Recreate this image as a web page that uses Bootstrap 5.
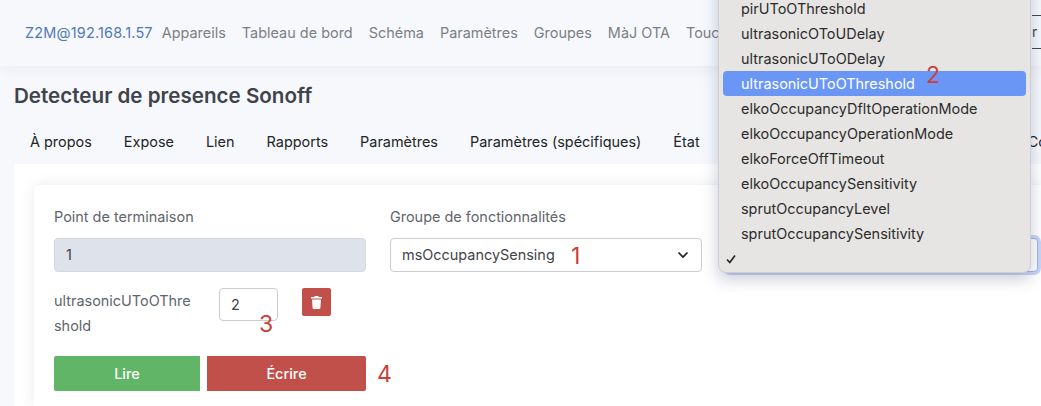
<!doctype html>
<html lang="fr">
<head>
<meta charset="utf-8">
<link href="https://cdn.jsdelivr.net/npm/bootstrap@5.3.0/dist/css/bootstrap.min.css" rel="stylesheet">
<style>
html,body{height:406px;overflow:hidden}
body{background:#f6f8fc;font-family:Inter,"Liberation Sans",sans-serif;font-size:14.45px;color:#3f4349;position:relative}
.topbar{height:66px;background:#f6f8fc;padding:0 0 0 25px;box-shadow:0 4px 14px rgba(60,70,90,.06);flex-wrap:nowrap;white-space:nowrap}
.brandlink{color:#5079b8;font-size:14.45px;letter-spacing:.2px;margin-right:1px;padding:0;flex:none}
.toplink{color:#7b7f86;font-size:14.45px;padding:0 8px;flex:none}
.topsearch{margin-left:auto;width:9px;height:34px;flex:none;border-top:1px solid #444;border-bottom:1px solid #444;margin-top:-3px;font-size:14px;line-height:32px;overflow:hidden;color:#444}
.pagetitle{font-size:20.6px;font-weight:600;color:#3f444b;margin:0;padding:18px 0 0 14px;line-height:24px}
.tabrow{flex-wrap:nowrap;white-space:nowrap;padding:22px 0 0 14px;height:56px;overflow:hidden}
.tablink{color:#212529;font-size:14.45px;padding:0 16px;line-height:24px;flex:none}
.tabgap{margin-left:296px}
.panel{background:#fff;margin-left:14px;padding:21px 0 0 20px;height:242px}
.innercard{background:#fff;border-radius:4px 0 0 0;box-shadow:0 0 14px rgba(50,60,90,.1);padding:20px 0 0 20px;height:221px;width:1007px}
.fieldlabel{color:#60656c;line-height:24px;margin:0 0 9px}
.fieldcol{width:312px;flex:none}
.field{height:34px;border:1px solid #c9ccd0;border-radius:4px;color:#3f4349;padding:0 11px;display:flex;align-items:center;background:#fff}
.fieldoff{background:#dee2ea;border-color:#d5d9e0}
.field .chev{margin-left:auto;margin-right:1px}
.fieldfocus{width:312px;border-color:#9db5e8;box-shadow:0 0 0 3px #c9d6f6}
.rowtwo{margin-top:16px}
.attrlabel{width:165px;flex:none;line-height:25px;color:#60656c;word-break:break-all}
.attrlabel div{width:140px}
.attrinput{width:59px;height:33px;flex:none;border:1px solid #c9ccd0;border-radius:4px;padding:0 11px;color:#3f4349;display:flex;align-items:center;background:#fff}
.trashbtn{width:29px;height:28px;background:#c1504a;border:0;border-radius:2px;margin-left:24px;padding:0;display:flex;align-items:center;justify-content:center}
.actions{margin-top:18px;width:312px}
.btnlire{width:146px;height:35px;background:#61b566;color:#fff;border:0;border-radius:2px 0 0 2px;font-size:14.45px;font-weight:500;padding:0}
.btnecrire{width:159px;height:35px;background:#c1504a;color:#fff;border:0;border-radius:0 2px 2px 0;font-size:14.45px;font-weight:500;margin-left:7px;padding:0}
.osmenu{position:absolute;left:718px;top:-40px;width:313px;height:313px;background:#e6e5e3;border:1px solid #cfcfd0;border-radius:0 0 8px 8px;box-shadow:0 6px 16px rgba(60,70,110,.28);padding:35px 4px 0;font-size:14.45px;color:#2c2c2c}
.osrow{height:25px;line-height:25px;padding-left:18px;border-radius:4px;position:relative;white-space:nowrap}
.oshot{background:#6a96f5;color:#fff}
.oscheck{position:absolute;left:3px;top:8px}
.redmark{position:absolute;color:#c9413a;font-size:23px;line-height:24px;font-weight:400}
.m1{left:571px;top:244px}.m2{left:926px;top:63px}.m3{left:259px;top:312px}.m4{left:377px;top:362px}
</style>
</head>
<body>
<nav class="topbar d-flex align-items-center">
  <a class="brandlink text-decoration-none" href="#">Z2M@192.168.1.57</a>
  <a class="toplink text-decoration-none" href="#">Appareils</a>
  <a class="toplink text-decoration-none" href="#">Tableau de bord</a>
  <a class="toplink text-decoration-none" href="#">Schéma</a>
  <a class="toplink text-decoration-none" href="#">Paramètres</a>
  <a class="toplink text-decoration-none" href="#">Groupes</a>
  <a class="toplink text-decoration-none" href="#">MàJ OTA</a>
  <a class="toplink text-decoration-none" href="#">Touchlink</a>
  <div class="topsearch">r l</div>
</nav>
<h1 class="pagetitle">Detecteur de presence Sonoff</h1>
<div class="tabrow d-flex">
  <a class="tablink text-decoration-none" href="#">À propos</a>
  <a class="tablink text-decoration-none" href="#">Expose</a>
  <a class="tablink text-decoration-none" href="#">Lien</a>
  <a class="tablink text-decoration-none" href="#">Rapports</a>
  <a class="tablink text-decoration-none" href="#">Paramètres</a>
  <a class="tablink text-decoration-none" href="#">Paramètres (spécifiques)</a>
  <a class="tablink text-decoration-none" href="#">État</a>
  <a class="tablink text-decoration-none tabgap" href="#">Console</a>
</div>
<main class="panel">
  <div class="innercard">
    <div class="d-flex gap-4">
      <div class="fieldcol">
        <label class="fieldlabel d-block">Point de terminaison</label>
        <div class="field fieldoff">1</div>
      </div>
      <div class="fieldcol">
        <label class="fieldlabel d-block">Groupe de fonctionnalités</label>
        <div class="field">msOccupancySensing
          <svg class="chev" width="12" height="8" viewBox="0 0 12 8"><path d="M1.5 1.5 6 6l4.500-4.500" fill="none" stroke="#222" stroke-width="1.700"/></svg>
        </div>
      </div>
      <div class="fieldcol">
        <label class="fieldlabel d-block">&nbsp;</label>
        <div class="field fieldfocus"></div>
      </div>
    </div>
    <div class="rowtwo d-flex align-items-start">
      <div class="attrlabel"><div>ultrasonicUToOThreshold</div></div>
      <div class="attrinput">2</div>
      <button class="trashbtn" type="button" aria-label="Supprimer">
        <svg width="11" height="13" viewBox="0 0 11 13"><path fill="#fff" d="M3.700 0h3.600l.5 1H11v1.500H0V1h3.200zM1 3.500h9l-.6 8.400a1.200 1.200 0 0 1-1.200 1.100H2.800a1.200 1.200 0 0 1-1.200-1.100z"/></svg>
      </button>
    </div>
    <div class="actions d-flex">
      <button class="btnlire" type="button">Lire</button>
      <button class="btnecrire" type="button">Écrire</button>
    </div>
  </div>
</main>
<div class="osmenu">
  <div class="osrow">pirUToOThreshold</div>
  <div class="osrow">ultrasonicOToUDelay</div>
  <div class="osrow">ultrasonicUToODelay</div>
  <div class="osrow oshot">ultrasonicUToOThreshold</div>
  <div class="osrow">elkoOccupancyDfltOperationMode</div>
  <div class="osrow">elkoOccupancyOperationMode</div>
  <div class="osrow">elkoForceOffTimeout</div>
  <div class="osrow">elkoOccupancySensitivity</div>
  <div class="osrow">sprutOccupancyLevel</div>
  <div class="osrow">sprutOccupancySensitivity</div>
  <div class="osrow"><svg class="oscheck" width="10" height="10" viewBox="0 0 10 10"><path d="M1 5.500 3.800 8.500 9 1.500" fill="none" stroke="#222" stroke-width="1.600"/></svg></div>
</div>
<span class="redmark m1">1</span>
<span class="redmark m2">2</span>
<span class="redmark m3">3</span>
<span class="redmark m4">4</span>
<script src="https://cdn.jsdelivr.net/npm/bootstrap@5.3.0/dist/js/bootstrap.bundle.min.js"></script>
</body>
</html>
